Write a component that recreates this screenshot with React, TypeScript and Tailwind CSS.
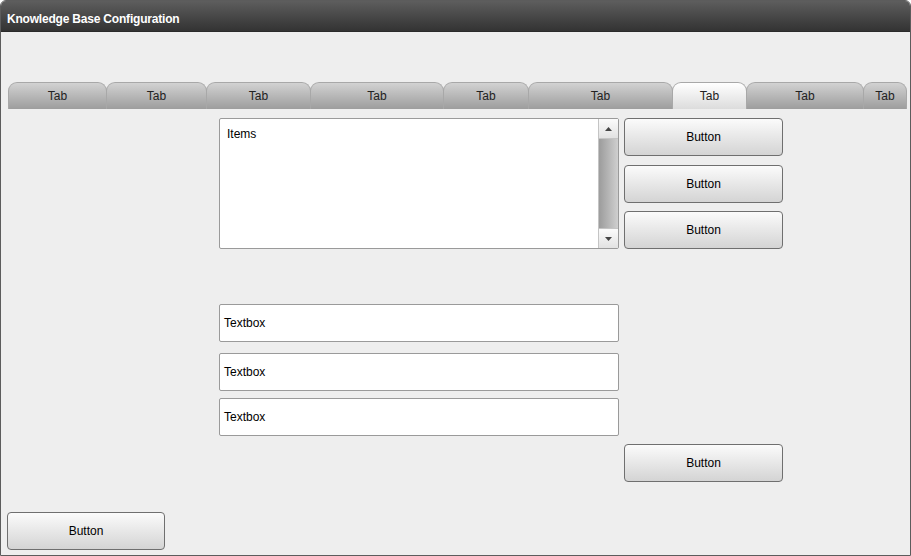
import React from "react";

const tabs = [99, 101, 105, 134, 86, 145, 75, 118, 44];
const selected = 6;

const Btn = ({ className = "" }: { className?: string }) => (
  <button
    className={
      "h-[38px] rounded-[4px] border border-[#6f6f6f] bg-gradient-to-b from-[#fbfbfb] to-[#d4d4d4] text-[12px] text-black " +
      className
    }
  >
    Button
  </button>
);

const Textbox = ({ className = "" }: { className?: string }) => (
  <div
    className={
      "w-[400px] h-[38px] rounded-[2px] border border-[#9a9a9a] bg-white flex items-center pl-[4px] text-[12px] text-black " +
      className
    }
  >
    Textbox
  </div>
);

const App = () => {
  return (
    <div className="w-[911px] h-[556px] bg-white font-['Liberation_Sans',Arial,sans-serif]">
      <div className="w-[911px] h-[556px] border border-[#5c5c5c] rounded-t-[6px] overflow-hidden flex flex-col bg-[#eeeeee]">
        <div className="h-[31px] shrink-0 bg-gradient-to-b from-[#5e5e5e] to-[#333333] border-b border-[#2a2a2a] flex items-center pt-[5px] px-[6px]">
          <span className="text-white font-bold text-[12px] tracking-[-0.2px]">Knowledge Base Configuration</span>
        </div>

        <div className="flex mt-[50px] ml-[7px] h-[27px]">
          {tabs.map((w, i) => (
            <div
              key={i}
              style={{ width: w }}
              className={
                "h-[27px] rounded-t-[9px] border-t border-x border-[#a8a8a8] flex items-center justify-center text-[12px] text-[#222] -mr-px " +
                (i === selected
                  ? "bg-gradient-to-b from-[#ffffff] to-[#dcdcdc]"
                  : "bg-gradient-to-b from-[#d2d2d2] to-[#9d9d9d]")
              }
            >
              Tab
            </div>
          ))}
        </div>

        <div className="flex flex-col pl-[218px] mt-[9px]">
          <div className="flex gap-[5px]">
            <div className="w-[400px] h-[131px] rounded-[2px] border border-[#9a9a9a] bg-white flex">
              <div className="flex-1 pl-[7px] pt-[6px] text-[12px] text-black">Items</div>
              <div className="w-[20px] flex flex-col border-l border-[#c4c4c4]">
                <div className="h-[20px] bg-gradient-to-b from-[#fbfbfb] to-[#e2e2e2] border-b border-[#c4c4c4] flex items-center justify-center">
                  <svg width="7" height="4" viewBox="0 0 7 4"><path d="M3.5 0L7 4H0z" fill="#444" /></svg>
                </div>
                <div className="flex-1 bg-gradient-to-r from-[#9c9c9c] to-[#cfcfcf]" />
                <div className="h-[20px] bg-gradient-to-b from-[#fbfbfb] to-[#e2e2e2] border-t border-[#c4c4c4] flex items-center justify-center">
                  <svg width="7" height="4" viewBox="0 0 7 4"><path d="M0 0H7L3.5 4z" fill="#444" /></svg>
                </div>
              </div>
            </div>
            <div className="flex flex-col justify-between h-[131px]">
              <Btn className="w-[159px]" />
              <Btn className="w-[159px]" />
              <Btn className="w-[159px]" />
            </div>
          </div>

          <Textbox className="mt-[55px]" />
          <Textbox className="mt-[11px]" />
          <Textbox className="mt-[7px]" />
          <Btn className="w-[159px] mt-[8px] ml-[405px]" />
        </div>

        <Btn className="w-[158px] mt-[30px] ml-[6px]" />
      </div>
    </div>
  );
};

export default App;
